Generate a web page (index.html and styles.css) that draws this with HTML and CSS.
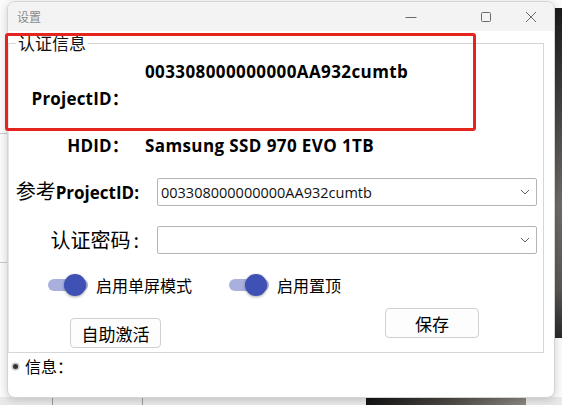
FILE: index.html
```html
<!DOCTYPE html>
<html lang="zh-CN">
  <head>
    <meta charset="UTF-8" />
    <meta name="viewport" content="width=device-width, initial-scale=1.0" />
    <title>设置</title>
    <link rel="stylesheet" href="styles.css">
  </head>
  <body>
    <div class="desktop">
      <!-- what shows behind the window -->
      <div class="bg-line bg-line-1"></div>
      <div class="bg-line bg-line-2"></div>
      <div class="bg-right"></div>
      <div class="bg-bottom">
        <span class="bg-tick tick-1"></span>
        <span class="bg-tick tick-2"></span>
        <span class="bg-dark"></span>
      </div>

      <!-- Settings window -->
      <div class="window">
        <div class="titlebar">
          <span class="title">设置</span>
          <div class="controls">
            <svg class="ctl-min" width="12" height="12" viewBox="0 0 12 12"><path d="M0.5 6.5h11" stroke="#6b6b6b" stroke-width="1"/></svg>
            <svg class="ctl-max" width="12" height="12" viewBox="0 0 12 12"><rect x="1.5" y="1.5" width="9" height="9" rx="1" fill="none" stroke="#6b6b6b" stroke-width="1"/></svg>
            <svg class="ctl-close" width="12" height="12" viewBox="0 0 12 12"><path d="M1 1l10 10M11 1L1 11" stroke="#6b6b6b" stroke-width="1"/></svg>
          </div>
        </div>

        <div class="content">
          <fieldset class="group">
            <legend>认证信息</legend>

            <div class="info-row pid-row">
              <span class="info-label pid-label">ProjectID：</span>
              <span class="info-value">003308000000000AA932cumtb</span>
            </div>

            <div class="info-row hdid-row">
              <span class="info-label">HDID：</span>
              <span class="info-value">Samsung SSD 970 EVO 1TB</span>
            </div>

            <div class="field-row">
              <label class="field-label">参考<b>ProjectID:</b></label>
              <div class="combo">
                <span class="combo-text">003308000000000AA932cumtb</span>
                <svg class="chevron" width="10" height="6" viewBox="0 0 10 6"><path d="M1 1l4 4 4-4" fill="none" stroke="#606060" stroke-width="1"/></svg>
              </div>
            </div>

            <div class="field-row pwd-row">
              <label class="field-label">认证密码<span class="colon">:</span></label>
              <div class="combo">
                <span class="combo-text"></span>
                <svg class="chevron" width="10" height="6" viewBox="0 0 10 6"><path d="M1 1l4 4 4-4" fill="none" stroke="#606060" stroke-width="1"/></svg>
              </div>
            </div>

            <div class="toggle-row">
              <div class="toggle">
                <span class="track"><span class="knob"></span></span>
                <span class="toggle-text">启用单屏模式</span>
              </div>
              <div class="toggle">
                <span class="track"><span class="knob"></span></span>
                <span class="toggle-text">启用置顶</span>
              </div>
            </div>

            <div class="button-row">
              <button class="btn btn-activate">自助激活</button>
              <button class="btn btn-save">保存</button>
            </div>
          </fieldset>

          <div class="status">
            <span class="dot"></span>
            <span>信息：</span>
          </div>
        </div>
      </div>

      <!-- red annotation box -->
      <div class="highlight"></div>
    </div>
  </body>
</html>
```

FILE: styles.css
```css
body {
  margin: 0;
  background: #ffffff;
  font-family: "Noto Sans CJK SC", "Open Sans", sans-serif;
}

.desktop {
  position: relative;
  width: 562px;
  height: 405px;
  overflow: hidden;
  background: #fbfbfb;
}

.bg-line {
  position: absolute;
  left: 0;
  width: 10px;
  height: 1px;
  background: #c8c8c8;
}

.bg-line-1 {
  top: 133px;
}

.bg-line-2 {
  top: 262px;
}

.bg-right {
  position: absolute;
  left: 554px;
  top: 8px;
  width: 8px;
  height: 330px;
  background: linear-gradient(to bottom, #1c1c1c 0%, #6e6a66 60%, #5a5652 85%, #2a2a2a 100%);
}

.bg-bottom {
  position: absolute;
  left: 0;
  top: 397px;
  width: 562px;
  height: 8px;
  background: #e9e9e9;
}

.bg-tick {
  position: absolute;
  top: 0;
  width: 1px;
  height: 8px;
  background: #9a9a9a;
}

.tick-1 {
  left: 52px;
}

.tick-2 {
  left: 142px;
}

.bg-dark {
  position: absolute;
  left: 366px;
  top: 0;
  width: 160px;
  height: 8px;
  background: linear-gradient(to right, #141414, #4a4642 50%, #8a8680);
}

.window {
  position: absolute;
  left: 7px;
  top: 1px;
  width: 546px;
  height: 395px;
  border: 1px solid #d4d4d4;
  border-radius: 8px;
  background: #ffffff;
  overflow: hidden;
  box-shadow: 0 2px 8px rgba(0, 0, 0, 0.18);
}

.titlebar {
  height: 29px;
  background: #f3f3f3;
  display: flex;
  align-items: center;
  justify-content: space-between;
}

.title {
  padding-left: 9px;
  font-size: 12px;
  color: #8a8a8a;
}

.controls {
  display: flex;
  align-items: center;
  padding-right: 17px;
}

.ctl-max {
  margin-left: 63px;
}

.ctl-close {
  margin-left: 33px;
}

.content {
  padding-top: 1px;
}

.group {
  margin: 0;
  padding: 0 0 4px 0;
  width: 534px;
  border: 1px solid #d6d6d6;
  border-left-color: #e4e4e4;
}

.group legend {
  margin-left: 7px;
  padding: 0 2px;
  font-size: 17px;
  line-height: 22px;
  color: #111;
}

.info-row {
  display: grid;
  grid-template-columns: 120px auto;
  column-gap: 16px;
  align-items: start;
  font-family: "Open Sans", "Noto Sans CJK SC", sans-serif;
  font-weight: 700;
  font-size: 17px;
  line-height: 22px;
  letter-spacing: 0.4px;
  color: #000;
}

.info-label {
  text-align: right;
  letter-spacing: 0.2px;
}

.pid-row {
  margin-top: 7px;
}

.pid-label {
  margin-top: 27px;
}

.hdid-row {
  margin-top: 25px;
}

.field-row {
  display: grid;
  grid-template-columns: 130px 380px;
  column-gap: 18px;
  align-items: center;
  margin-top: 21px;
}

.pwd-row {
  margin-top: 20px;
}

.field-label {
  text-align: right;
  font-size: 20px;
  line-height: 24px;
  color: #000;
  white-space: nowrap;
}

.field-label b {
  font-family: "Open Sans", sans-serif;
  font-size: 17px;
  font-weight: 700;
}

.colon {
  padding-left: 3px;
}

.combo {
  height: 26px;
  border: 1px solid #b4b4b4;
  border-radius: 2px;
  display: flex;
  align-items: center;
  justify-content: space-between;
  padding: 0 6px 0 3px;
}

.combo-text {
  font-family: "Open Sans", sans-serif;
  font-size: 14.5px;
  color: #111;
}

.toggle-row {
  display: flex;
  gap: 37px;
  margin-top: 20px;
  padding-left: 39px;
}

.toggle {
  display: flex;
  align-items: center;
  gap: 8px;
}

.track {
  position: relative;
  width: 40px;
  height: 12px;
  border-radius: 6px;
  background: #a9b0dd;
}

.knob {
  position: absolute;
  right: 2px;
  top: -5px;
  width: 22px;
  height: 22px;
  border-radius: 50%;
  background: #3f51b5;
  box-shadow: 0 1px 3px rgba(0, 0, 0, 0.35);
}

.toggle-text {
  font-size: 16px;
  line-height: 22px;
  color: #000;
}

.button-row {
  display: flex;
  align-items: flex-start;
  margin-top: 12px;
  padding-left: 61px;
}

.btn {
  font-family: "Noto Sans CJK SC", sans-serif;
  font-size: 17px;
  color: #000;
  background: #fdfdfd;
  border: 1px solid #d0d0d0;
  border-radius: 4px;
  height: 30px;
  padding: 0;
}

.btn-activate {
  width: 91px;
  margin-top: 10px;
}

.btn-save {
  width: 94px;
  margin-left: 224px;
}

.status {
  display: flex;
  align-items: center;
  gap: 7px;
  padding-left: 5px;
  margin-top: 3px;
  font-size: 16px;
  line-height: 20px;
}

.dot {
  width: 5px;
  height: 5px;
  border-radius: 50%;
  background: #333;
  box-shadow: 0 0 0 1.5px #c8c8c8;
}

.highlight {
  position: absolute;
  left: 5px;
  top: 33px;
  width: 465px;
  height: 92px;
  border: 3px solid #e3241f;
  border-radius: 3px;
}
```
